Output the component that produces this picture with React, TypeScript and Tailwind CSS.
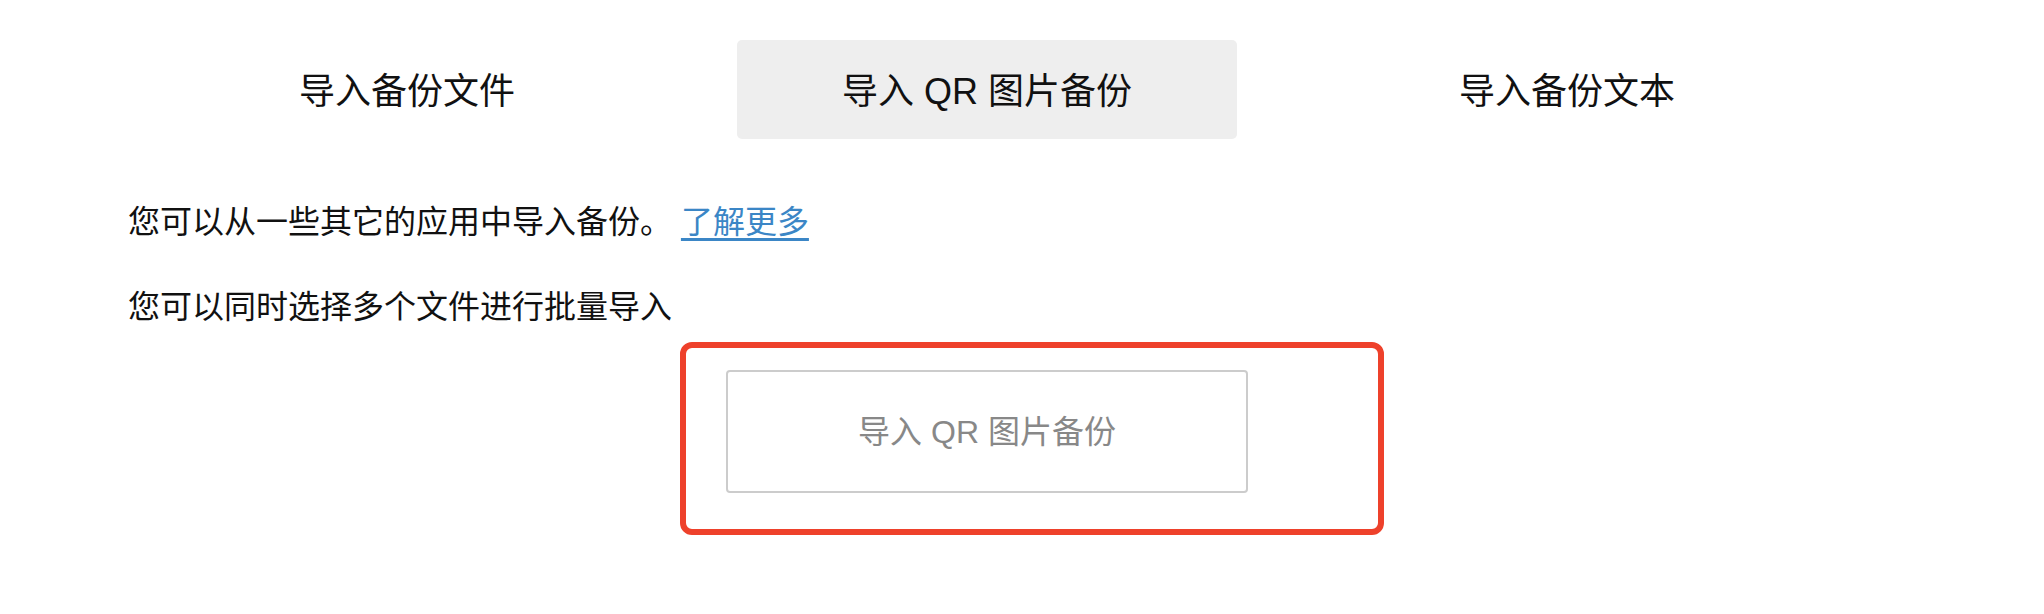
const tabs = ["导入备份文件", "导入 QR 图片备份", "导入备份文本"];

export default function App() {
  const active = 1;
  return (
    <div
      className="min-h-[614px] w-[2044px] bg-white text-[#111]"
      style={{ fontFamily: '"Liberation Sans", "Noto Sans CJK SC", sans-serif' }}
    >
      <div className="ml-[128px] w-[1718px] pt-[40px]">
        <div className="grid grid-cols-3 gap-[80px] px-[29px]">
          {tabs.map((t, i) => (
            <div
              key={t}
              className={
                "flex h-[99px] items-center justify-center rounded-[5px] pt-[4px] text-[36px] leading-none " +
                (i === active ? "bg-[#eeeeee]" : "")
              }
            >
              {t}
            </div>
          ))}
        </div>

        <p className="mt-[59px] text-[32px] leading-[48px]">
          您可以从一些其它的应用中导入备份。{" "}
          <a href="#" className="text-[#3b86c6] underline underline-offset-[5px] decoration-[3px]">
            了解更多
          </a>
        </p>
        <p className="mt-[37px] text-[32px] leading-[48px]">您可以同时选择多个文件进行批量导入</p>

        <div className="mt-[39px] flex justify-center">
          <div className="relative">
            <button className="flex h-[123px] w-[522px] items-center justify-center rounded-[4px] border-2 border-[#cccccc] bg-white text-[32px] leading-none text-[#888888]">
              导入 QR 图片备份
            </button>
            <div className="pointer-events-none absolute -left-[46px] -top-[28px] h-[193px] w-[704px] rounded-[12px] border-[6px] border-[#ee412b]" />
          </div>
        </div>
      </div>
    </div>
  );
}
